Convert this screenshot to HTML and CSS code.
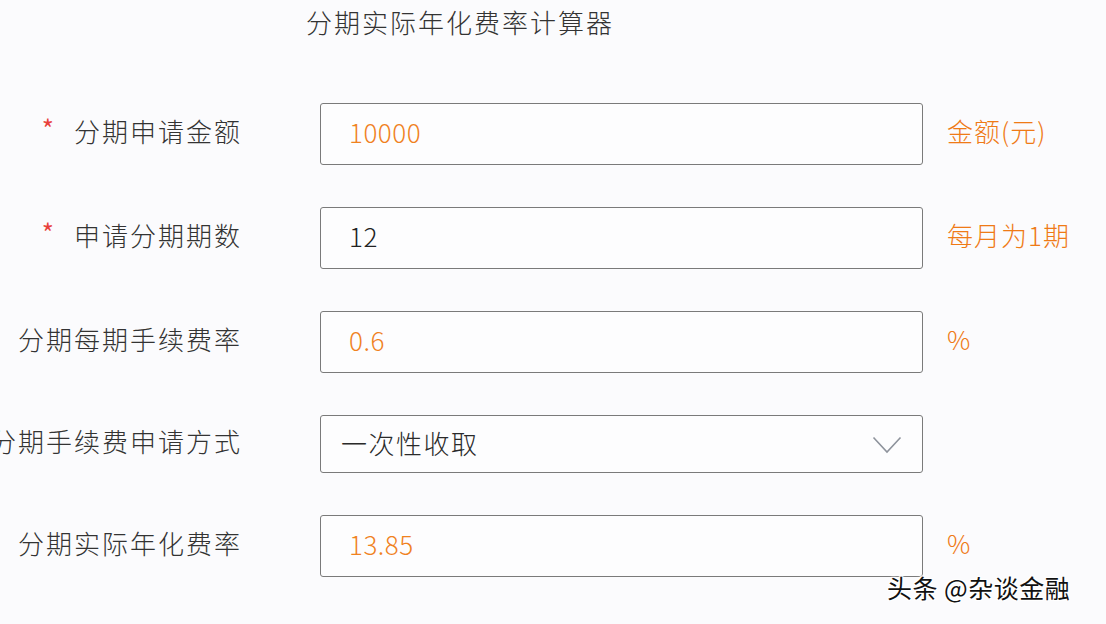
FILE: index.html
```html
<!DOCTYPE html>
<html lang="zh-CN">
<head>
<meta charset="utf-8">
<title>分期实际年化费率计算器</title>
<link rel="stylesheet" href="styles.css">
</head>
<body>
<div class="page">
  <h1 class="title">分期实际年化费率计算器</h1>
  <div class="form">
    <div class="label"><span class="req">*</span>分期申请金额</div>
    <div class="field"><span class="val orange">10000</span></div>
    <div class="unit">金额(元)</div>

    <div class="label"><span class="req">*</span>申请分期期数</div>
    <div class="field"><span class="val">12</span></div>
    <div class="unit">每月为1期</div>

    <div class="label">分期每期手续费率</div>
    <div class="field"><span class="val orange">0.6</span></div>
    <div class="unit">%</div>

    <div class="label">分期手续费申请方式</div>
    <div class="field select"><span class="val cn">一次性收取</span>
      <svg class="chev" width="30" height="18" viewBox="0 0 30 18"><path d="M1.5 1.5 L15 16 L28.5 1.5" fill="none" stroke="#8e939c" stroke-width="1.6"/></svg>
    </div>
    <div class="unit"></div>

    <div class="label">分期实际年化费率</div>
    <div class="field"><span class="val orange">13.85</span></div>
    <div class="unit">%</div>
  </div>
  <div class="watermark">头条 @杂谈金融</div>
</div>
</body>
</html>
```

FILE: styles.css
```css
html, body {
  margin: 0;
  padding: 0;
  background: #fbfbfd;
}
body {
  width: 1106px;
  height: 624px;
  overflow: hidden;
  font-family: "Noto Sans CJK SC", "Microsoft YaHei", "Noto Sans", sans-serif;
  font-weight: 300;
  color: #333;
}
.page {
  position: relative;
  width: 1106px;
  height: 624px;
}
.title {
  margin: 0;
  padding: 5px 0 0 306px;
  height: 96px;
  box-sizing: border-box;
  font-size: 26px;
  font-weight: 300;
  letter-spacing: 2px;
  line-height: 34px;
  color: #333;
}
.form {
  display: grid;
  grid-template-columns: 242px 603px auto;
  row-gap: 42px;
  margin-top: 7px;
  align-items: center;
}
.label {
  grid-column: 1;
  justify-self: end;
  white-space: nowrap;
  font-size: 26px;
  letter-spacing: 2px;
  color: #333;
  padding-bottom: 7px;
}
.form .field { grid-column: 2; margin-left: 78px; }
.form .unit { grid-column: 3; margin-left: 102px; }
.req {
  color: #e8413b;
  font-size: 26px;
  font-weight: 400;
  margin-right: 18px;
  position: relative;
  top: -3px;
}
.field {
  height: 62px;
  box-sizing: border-box;
  border: 1.5px solid #7a7a7a;
  border-radius: 3px;
  background: #fdfdfe;
  display: flex;
  align-items: center;
  padding-left: 28px;
  padding-bottom: 6px;
  width: 603px;
}
.field.select {
  height: 58px;
  padding-left: 20px;
  padding-bottom: 4px;
  justify-content: space-between;
  padding-right: 20px;
}
.val {
  font-size: 26px;
  letter-spacing: 0.5px;
  color: #222;
}
.val.cn { letter-spacing: 1.5px; color: #2a2a2a; }
.val.orange { color: #f0821f; }
.chev { display: block; margin-top: 6px; }
.unit {
  font-size: 26px;
  letter-spacing: 1px;
  color: #ef7a16;
  white-space: nowrap;
  padding-bottom: 7px;
}
.watermark {
  position: absolute;
  left: 885px;
  top: 570px;
  font-size: 25px;
  font-weight: 400;
  letter-spacing: 0.5px;
  color: #111;
  line-height: 34px;
  padding: 0 2px;
  text-shadow: 0 0 2px #fff, 1px 1px 1px #fff, -1px -1px 1px #fff, 1px -1px 1px #fff, -1px 1px 1px #fff, 0 0 4px #fff;
}
```
